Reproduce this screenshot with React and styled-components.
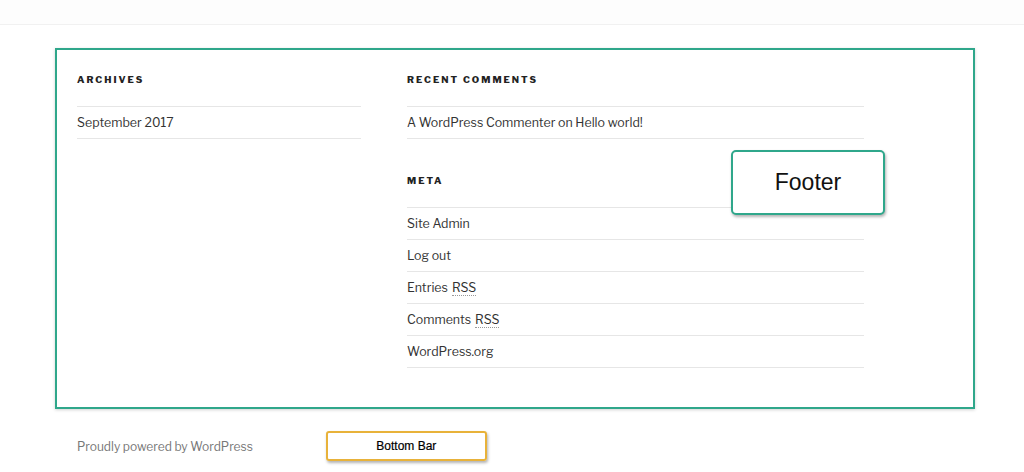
import React from 'react';
import styled, { createGlobalStyle } from 'styled-components';

const GlobalStyle = createGlobalStyle`
  body {
    margin: 0;
    background: #fff;
    font-family: "Libre Franklin", "Noto Sans", "Liberation Sans", sans-serif;
  }
`;

const Page = styled.div`
  width: 1024px;
  height: 472px;
  overflow: hidden;
  background: #fff;
`;

const TopStrip = styled.div`
  height: 24px;
  background: #fdfdfd;
  border-bottom: 1px solid #f1f1f1;
`;

const Frame = styled.div`
  position: relative;
  box-sizing: border-box;
  margin: 23px 0 0 55px;
  width: 920px;
  height: 361px;
  border: 2px solid #2fa78b;
  box-shadow: 0 1px 3px rgba(0, 0, 0, 0.18);
  padding: 23px 0 0 20px;
  display: grid;
  grid-template-columns: 284px 457px;
  column-gap: 46px;
  align-items: start;
`;

const Column = styled.div`
  display: flex;
  flex-direction: column;
`;

const Widget = styled.section`
  margin-bottom: ${p => p.$gap || 0}px;
`;

const Heading = styled.h2`
  margin: 0 0 19px;
  font-size: 9.5px;
  line-height: 14px;
  font-weight: 800;
  letter-spacing: 2px;
  text-transform: uppercase;
  color: #222;
`;

const List = styled.ul`
  list-style: none;
  margin: 0;
  padding: 0;
  border-top: 1px solid #e6e6e6;
`;

const Item = styled.li`
  height: 31px;
  border-bottom: 1px solid #e6e6e6;
  display: flex;
  align-items: center;
  font-size: 12.4px;
  color: #333;
`;

const Abbr = styled.span`
  margin-left: 4px;
  border-bottom: 1px dotted #999;
  line-height: 15px;
`;

const Label = styled.div`
  position: absolute;
  box-sizing: border-box;
  left: 674px;
  top: 100px;
  width: 154px;
  height: 65px;
  border: 2px solid #2fa78b;
  border-radius: 5px;
  background: #fff;
  box-shadow: 1px 2px 3px rgba(0, 0, 0, 0.3);
  display: flex;
  align-items: center;
  justify-content: center;
  font-family: "Liberation Sans", Arial, sans-serif;
  font-size: 23px;
  color: #111;
`;

const Bottom = styled.div`
  display: flex;
  align-items: center;
  padding: 22px 0 0 77px;
  gap: 73px;
`;

const Credit = styled.span`
  font-size: 12px;
  color: #777;
`;

const BarTag = styled.div`
  box-sizing: border-box;
  width: 161px;
  height: 30px;
  border: 2px solid #e8b23a;
  border-radius: 3px;
  box-shadow: 1px 2px 3px rgba(0, 0, 0, 0.3);
  display: flex;
  align-items: center;
  justify-content: center;
  font-family: "Liberation Sans", Arial, sans-serif;
  font-size: 12px;
  color: #000;
  -webkit-text-stroke: 0.2px #000;
`;

const meta = [
  ['Site Admin'],
  ['Log out'],
  ['Entries', 'RSS'],
  ['Comments', 'RSS'],
  ['WordPress.org'],
];

export default function App() {
  return (
    <Page>
      <GlobalStyle />
      <TopStrip />
      <Frame>
        <Column>
          <Widget>
            <Heading>Archives</Heading>
            <List>
              <Item>September 2017</Item>
            </List>
          </Widget>
        </Column>
        <Column>
          <Widget $gap={35}>
            <Heading>Recent Comments</Heading>
            <List>
              <Item>A WordPress Commenter on Hello world!</Item>
            </List>
          </Widget>
          <Widget>
            <Heading>Meta</Heading>
            <List>
              {meta.map(([text, abbr]) => (
                <Item key={text}>
                  {text}
                  {abbr && <Abbr>{abbr}</Abbr>}
                </Item>
              ))}
            </List>
          </Widget>
        </Column>
        <Label>Footer</Label>
      </Frame>
      <Bottom>
        <Credit>Proudly powered by WordPress</Credit>
        <BarTag>Bottom Bar</BarTag>
      </Bottom>
    </Page>
  );
}
